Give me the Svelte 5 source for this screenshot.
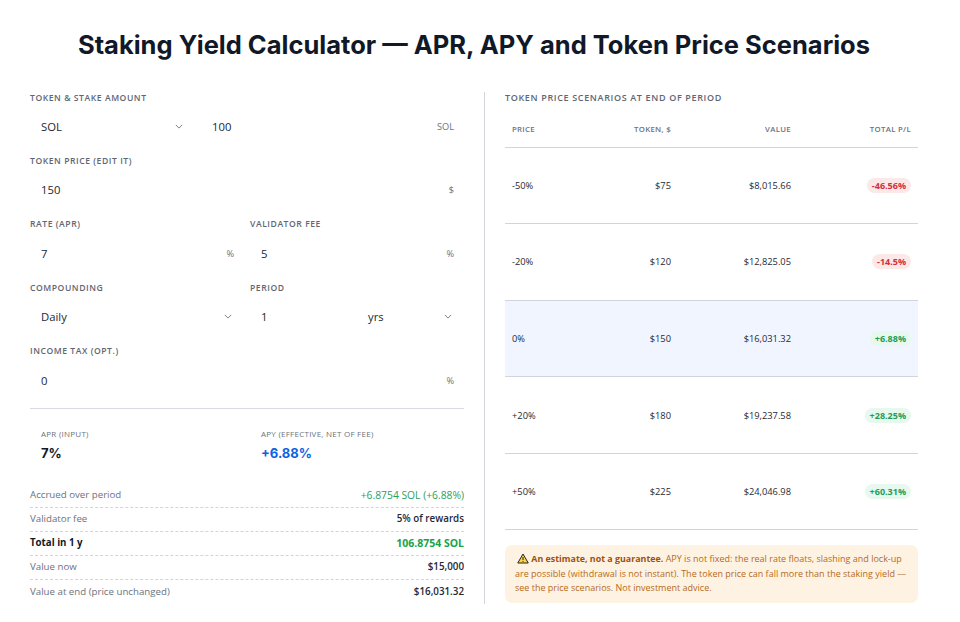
<script>
    const scenarios = [
        { move: '-50%', token: '$75', value: '$8,015.66', pl: '-46.56%', up: false },
        { move: '-20%', token: '$120', value: '$12,825.05', pl: '-14.5%', up: false },
        { move: '0%', token: '$150', value: '$16,031.32', pl: '+6.88%', up: true, current: true },
        { move: '+20%', token: '$180', value: '$19,237.58', pl: '+28.25%', up: true },
        { move: '+50%', token: '$225', value: '$24,046.98', pl: '+60.31%', up: true }
    ];
</script>

{#snippet chevron()}
    <svg class="chevron" viewBox="0 0 10 6" width="8" height="5" aria-hidden="true">
        <path d="M1 1l4 4 4-4" fill="none" stroke="#6b7280" stroke-width="1.1" />
    </svg>
{/snippet}

<main class="page">
    <h1>Staking Yield Calculator — APR, APY and Token Price Scenarios</h1>

    <div class="columns">
        <section class="inputs">
            <div class="field">
                <div class="label">Token &amp; stake amount</div>
                <div class="token-row">
                    <div class="control"><span>SOL</span>{@render chevron()}</div>
                    <div class="control"><span>100</span><span class="unit">SOL</span></div>
                </div>
            </div>

            <div class="field">
                <div class="label">Token price (edit it)</div>
                <div class="control"><span>150</span><span class="unit">$</span></div>
            </div>

            <div class="pair">
                <div class="field">
                    <div class="label">Rate (APR)</div>
                    <div class="control"><span>7</span><span class="unit">%</span></div>
                </div>
                <div class="field">
                    <div class="label">Validator fee</div>
                    <div class="control"><span>5</span><span class="unit">%</span></div>
                </div>
            </div>

            <div class="pair">
                <div class="field">
                    <div class="label">Compounding</div>
                    <div class="control"><span>Daily</span>{@render chevron()}</div>
                </div>
                <div class="field">
                    <div class="label">Period</div>
                    <div class="period">
                        <div class="control"><span>1</span></div>
                        <div class="control"><span>yrs</span>{@render chevron()}</div>
                    </div>
                </div>
            </div>

            <div class="field">
                <div class="label">Income tax (opt.)</div>
                <div class="control"><span>0</span><span class="unit">%</span></div>
            </div>

            <div class="stats">
                <div>
                    <div class="stat-label">APR (input)</div>
                    <div class="stat-value">7%</div>
                </div>
                <div>
                    <div class="stat-label">APY (effective, net of fee)</div>
                    <div class="stat-value blue">+6.88%</div>
                </div>
            </div>

            <div class="summary">
                <div class="line"><span>Accrued over period</span><b class="gain">+6.8754 SOL (+6.88%)</b></div>
                <div class="line"><span>Validator fee</span><b>5% of rewards</b></div>
                <div class="line total"><span>Total in 1 y</span><b class="gain">106.8754 SOL</b></div>
                <div class="line"><span>Value now</span><b>$15,000</b></div>
                <div class="line"><span>Value at end (price unchanged)</span><b>$16,031.32</b></div>
            </div>
        </section>

        <section class="results">
            <h2>Token price scenarios at end of period</h2>
            <table>
                <thead>
                    <tr>
                        <th class="left">Price</th>
                        <th>Token, $</th>
                        <th>Value</th>
                        <th>Total P/L</th>
                    </tr>
                </thead>
                <tbody>
                    {#each scenarios as row}
                        <tr class:current={row.current}>
                            <td class="left">{row.move}</td>
                            <td>{row.token}</td>
                            <td>{row.value}</td>
                            <td><span class="badge" class:up={row.up}>{row.pl}</span></td>
                        </tr>
                    {/each}
                </tbody>
            </table>

            <div class="note">
                <svg class="warn" viewBox="0 0 16 14" width="12" height="11" aria-hidden="true">
                    <path d="M8 1l7 12H1z" fill="#fcd34d" stroke="#1f1f1f" stroke-width="1.3" stroke-linejoin="round" />
                    <path d="M8 5v4M8 10.2v1.2" stroke="#1f1f1f" stroke-width="1.3" />
                </svg>
                <strong>An estimate, not a guarantee.</strong> APY is not fixed: the real rate floats, slashing and lock-up are possible (withdrawal is not instant). The token price can fall more than the staking yield — see the price scenarios. Not investment advice.
            </div>
        </section>
    </div>
</main>

<style>
    :global(body) {
        margin: 0;
        background: #fff;
    }

    .page {
        width: 960px;
        height: 622px;
        box-sizing: border-box;
        padding: 29px 42px 20px 30px;
        font-family: "Open Sans", "Noto Sans", sans-serif;
        color: #1f2937;
        overflow: hidden;
    }

    h1 {
        margin: 0 0 31px;
        font-family: Inter, sans-serif;
        font-size: 25.5px;
        line-height: 32px;
        font-weight: 700;
        text-align: center;
        color: #111827;
    }

    .columns {
        display: grid;
        grid-template-columns: 434px 1fr;
        height: 510px;
    }

    .inputs {
        display: flex;
        flex-direction: column;
    }

    .field {
        height: 63.4px;
    }

    .label {
        margin-top: -0.5px;
        font-size: 8.6px;
        line-height: 12px;
        font-weight: 600;
        letter-spacing: 0.55px;
        text-transform: uppercase;
        color: #5f6672;
    }

    .control {
        height: 36px;
        margin-top: 5px;
        display: flex;
        align-items: center;
        justify-content: space-between;
        padding: 0 10px 0 11px;
        font-size: 11.3px;
        color: #222831;
    }

    .unit {
        font-size: 9.2px;
        color: #6b7280;
    }

    .chevron {
        margin-right: 2px;
    }

    .token-row {
        display: grid;
        grid-template-columns: 165px 1fr;
        gap: 6px;
    }

    .pair {
        display: grid;
        grid-template-columns: 1fr 1fr;
        gap: 6px;
    }

    .period {
        display: grid;
        grid-template-columns: 1fr 1fr;
    }

    .stats {
        display: grid;
        grid-template-columns: 1fr 1fr;
        gap: 6px;
        margin-top: -1px;
        border-top: 1px solid #d9dbe0;
        padding-top: 19px;
        height: 52px;
    }

    .stats > div {
        padding-left: 11px;
    }

    .stat-label {
        font-size: 8px;
        line-height: 11px;
        letter-spacing: 0.25px;
        text-transform: uppercase;
        color: #6b7280;
    }

    .stat-value {
        margin-top: 5px;
        font-family: Inter, sans-serif;
        font-size: 13px;
        line-height: 18px;
        font-weight: 700;
        color: #111827;
    }

    .blue {
        color: #0b63e5;
    }

    .summary {
        margin-top: 4px;
    }

    .line {
        display: flex;
        justify-content: space-between;
        align-items: center;
        height: 24px;
        padding-bottom: 1px;
        font-size: 9.7px;
        color: #6b7280;
        border-bottom: 1px dashed #d1d5db;
        box-sizing: border-box;
    }

    .line:last-child {
        border-bottom: 0;
    }

    .line b {
        font-weight: 600;
        font-size: 9.8px;
        color: #1f2937;
    }

    .line b.gain {
        font-weight: 400;
        font-size: 10.3px;
        color: #2e9e5b;
    }

    .line.total {
        font-weight: 700;
        color: #111827;
    }

    .line.total b.gain {
        font-weight: 700;
        font-size: 10.5px;
        color: #16a34a;
    }

    .results {
        display: flex;
        flex-direction: column;
        margin-left: 20px;
        padding-left: 20px;
        border-left: 1px solid #d1d5db;
        min-width: 0;
    }

    h2 {
        margin: 0;
        font-size: 9px;
        line-height: 12px;
        font-weight: 600;
        letter-spacing: 0.65px;
        text-transform: uppercase;
        color: #5f6672;
    }

    table {
        width: 100%;
        margin-top: 7px;
        border-collapse: collapse;
        table-layout: fixed;
        font-size: 9.3px;
    }

    th {
        height: 36px;
        padding: 1px 7px 0;
        box-sizing: border-box;
        text-align: right;
        font-size: 7.8px;
        font-weight: 600;
        letter-spacing: 0.3px;
        text-transform: uppercase;
        color: #6b7280;
        border-bottom: 1px solid #d1d5db;
    }

    th:first-child {
        width: 70px;
    }

    th:nth-child(3),
    th:nth-child(4) {
        width: 120px;
    }

    td {
        height: 75.6px;
        padding: 0 7px;
        text-align: right;
        color: #1f2937;
        border-bottom: 1px solid #d1d5db;
    }

    th.left,
    td.left {
        text-align: left;
    }

    tr.current td {
        background: #f0f5ff;
        font-weight: 500;
    }

    .badge {
        display: inline-block;
        padding: 2px 5px;
        border-radius: 8px;
        font-size: 9px;
        line-height: 11px;
        font-weight: 700;
        background: #fde8e8;
        color: #d32f3a;
    }

    .badge.up {
        background: #e7f8ee;
        color: #1f9d55;
    }

    .note {
        margin-top: auto;
        margin-bottom: 1px;
        padding: 7px 10px;
        border-radius: 7px;
        background: #fef3e2;
        font-size: 9px;
        line-height: 14.5px;
        color: #b8691a;
    }

    .note strong {
        font-size: 8.9px;
        font-weight: 700;
        color: #a04f10;
    }

    .warn {
        margin-left: 2px;
        vertical-align: -1.5px;
    }
</style>
